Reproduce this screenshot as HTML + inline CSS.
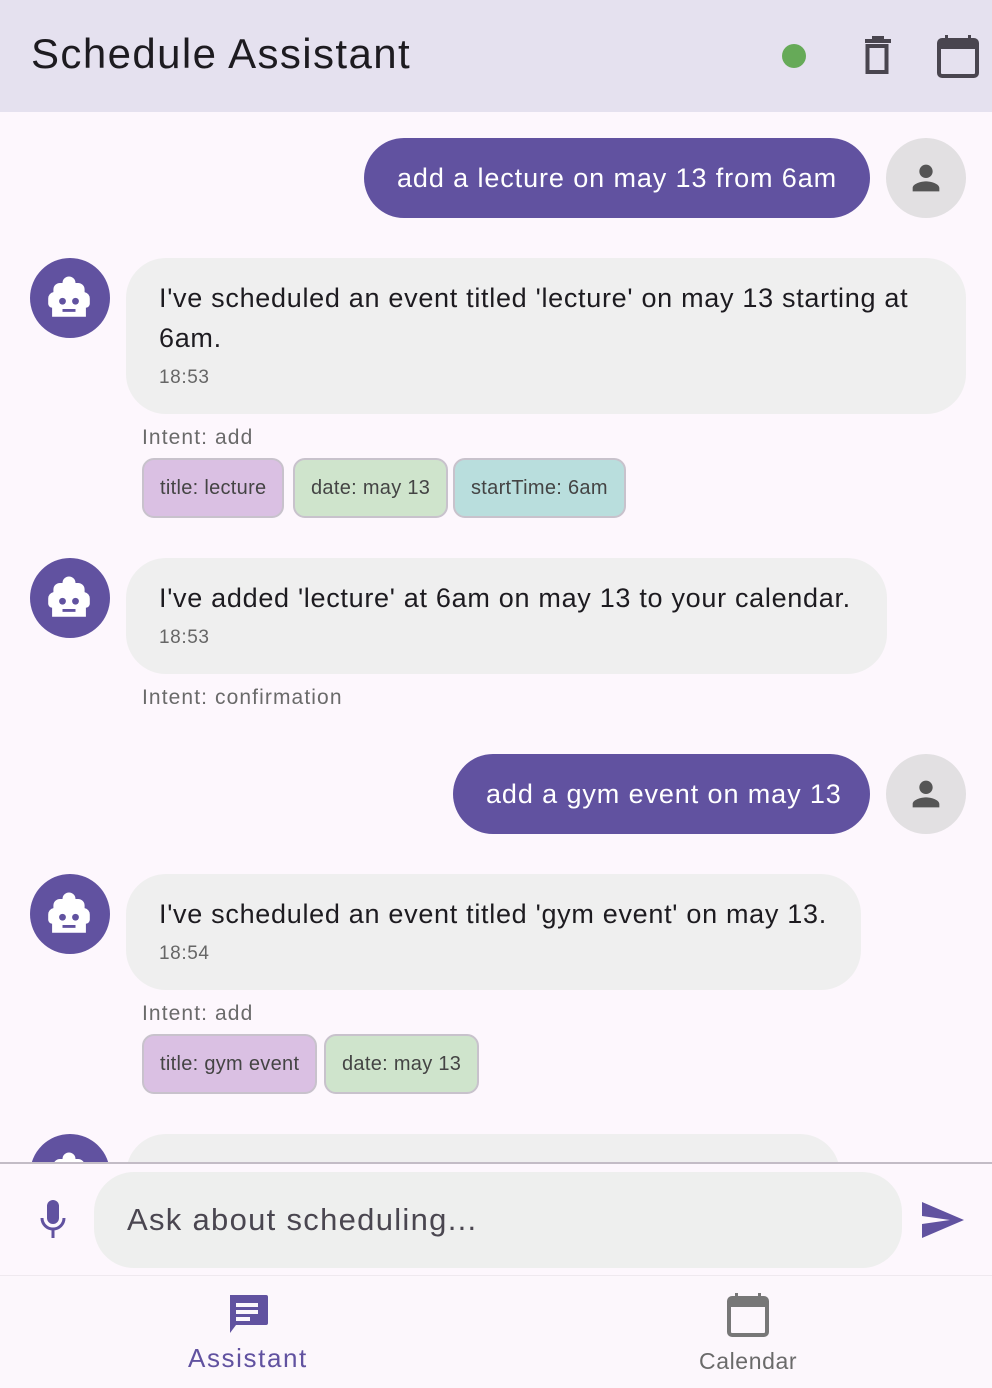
<!DOCTYPE html>
<html><head><meta charset="utf-8"><style>
*{margin:0;padding:0;box-sizing:border-box}
body{width:992px;height:1388px;overflow:hidden;background:#fdf7fd;font-family:"Liberation Sans",sans-serif;position:relative;color:#1d1b20}
.a{position:absolute}
.hdr{left:0;top:0;width:992px;height:112px;background:#e5e1ef}
.title{left:31px;top:30px;font-size:42px;color:#1d1b20;letter-spacing:1.4px}
.ub{background:#6152a0;color:#fff;border-radius:40px;height:80px;font-size:27px;line-height:80px;padding:0 33px;letter-spacing:0.9px;white-space:nowrap}
.uav{width:80px;height:80px;border-radius:50%;background:#e2e0e2}
.bav{width:80px;height:80px;border-radius:50%;background:#6152a0}
.bb{background:#efefef;border-radius:40px;padding:20px 33px 0 33px;font-size:27px;line-height:40px;color:#1d1b20;letter-spacing:0.7px}
.tm{font-size:19px;color:#666;line-height:28px;margin-top:6px;letter-spacing:0.6px}
.in{font-size:21px;color:#6a6a6a;letter-spacing:1.1px}
.chip{height:60px;border-radius:12px;border:2px solid #c8c2cc;font-size:20px;line-height:56px;padding:0 16px;color:#444;letter-spacing:0.3px;white-space:nowrap}
.p{background:#dac0e3}.g{background:#cfe4cc}.t{background:#b9dedd}
</style></head><body>
<div class="a hdr"></div>
<div class="a title">Schedule Assistant</div>
<div class="a" style="left:782px;top:44px;width:24px;height:24px;border-radius:50%;background:#66aa58"></div>
<svg class="a" style="left:862px;top:36px" width="32" height="40" viewBox="0 0 32 40"><rect x="3" y="3" width="26" height="4" fill="#49454f"/><rect x="10" y="0" width="12" height="4" fill="#49454f"/><rect x="5.5" y="10" width="19" height="26" fill="none" stroke="#49454f" stroke-width="4"/></svg>
<svg class="a" style="left:936px;top:34px" width="44" height="44" viewBox="0 0 44 44"><rect x="3" y="6" width="38" height="36" rx="3" fill="none" stroke="#49454f" stroke-width="4"/><rect x="3" y="6" width="38" height="9" fill="#49454f"/><rect x="9" y="1" width="3" height="6" fill="#49454f"/><rect x="32" y="1" width="3" height="6" fill="#49454f"/></svg>

<div class="a ub" style="left:364px;top:138px;width:506px">add a lecture on may 13 from 6am</div>
<div class="a uav" style="left:886px;top:138px"></div>
<svg class="a" style="left:906px;top:158px" width="40" height="40" viewBox="0 0 24 24"><path fill="#555" d="M12 12c2.2 0 4-1.8 4-4s-1.8-4-4-4-4 1.8-4 4 1.8 4 4 4zm0 2c-2.7 0-8 1.3-8 4v2h16v-2c0-2.7-5.3-4-8-4z"/></svg>

<svg width="0" height="0" style="position:absolute"><defs><g id="bot" transform="translate(39 38) scale(1.3) translate(-40 -30)"><path fill="#fff" d="M40 15a5 5 0 0 1 5 5h2a5 5 0 0 1 5 5v2a5 5 0 0 1 4 5v4a3 3 0 0 1-3 3v7H27v-7a3 3 0 0 1-3-3v-4a5 5 0 0 1 4-5v-2a5 5 0 0 1 5-5h2a5 5 0 0 1 5-5z"/><circle cx="35" cy="34" r="2.6" fill="#6152a0"/><circle cx="45" cy="34" r="2.6" fill="#6152a0"/><rect x="35" y="40" width="10" height="2.2" fill="#6152a0"/></g></defs></svg>

<div class="a bav" style="left:30px;top:258px"><svg width="80" height="80"><use href="#bot"/></svg></div>
<div class="a bb" style="left:126px;top:258px;width:840px;height:156px">I've scheduled an event titled 'lecture' on may 13 starting at 6am.<div class="tm">18:53</div></div>
<div class="a in" style="left:142px;top:426px">Intent: add</div>
<div class="a chip p" style="left:142px;top:458px">title: lecture</div>
<div class="a chip g" style="left:293px;top:458px">date: may 13</div>
<div class="a chip t" style="left:453px;top:458px">startTime: 6am</div>

<div class="a bav" style="left:30px;top:558px"><svg width="80" height="80"><use href="#bot"/></svg></div>
<div class="a bb" style="left:126px;top:558px;width:761px;height:116px;white-space:nowrap">I've added 'lecture' at 6am on may 13 to your calendar.<div class="tm">18:53</div></div>
<div class="a in" style="left:142px;top:686px">Intent: confirmation</div>

<div class="a ub" style="left:453px;top:754px;width:417px">add a gym event on may 13</div>
<div class="a uav" style="left:886px;top:754px"></div>
<svg class="a" style="left:906px;top:774px" width="40" height="40" viewBox="0 0 24 24"><path fill="#555" d="M12 12c2.2 0 4-1.8 4-4s-1.8-4-4-4-4 1.8-4 4 1.8 4 4 4zm0 2c-2.7 0-8 1.3-8 4v2h16v-2c0-2.7-5.3-4-8-4z"/></svg>

<div class="a bav" style="left:30px;top:874px"><svg width="80" height="80"><use href="#bot"/></svg></div>
<div class="a bb" style="left:126px;top:874px;width:735px;height:116px;white-space:nowrap">I've scheduled an event titled 'gym event' on may 13.<div class="tm">18:54</div></div>
<div class="a in" style="left:142px;top:1002px">Intent: add</div>
<div class="a chip p" style="left:142px;top:1034px">title: gym event</div>
<div class="a chip g" style="left:324px;top:1034px">date: may 13</div>

<div class="a bav" style="left:30px;top:1134px"><svg width="80" height="80"><use href="#bot"/></svg></div>
<div class="a" style="left:126px;top:1134px;width:714px;height:80px;border-radius:40px;background:#efefef"></div>

<div class="a" style="left:0;top:1162px;width:992px;height:2px;background:#c3bcc6"></div>
<div class="a" style="left:0;top:1164px;width:992px;height:111px;background:#fdf7fd"></div>
<svg class="a" style="left:36px;top:1198px" width="36" height="42" viewBox="0 0 36 42"><rect x="11" y="2" width="12" height="24" rx="6" fill="#6152a0"/><path d="M6 20a11 11 0 0 0 22 0" fill="none" stroke="#6152a0" stroke-width="3"/><rect x="15.5" y="30" width="3" height="10" fill="#6152a0"/></svg>
<div class="a" style="left:94px;top:1172px;width:808px;height:96px;border-radius:40px;background:#eeefee;font-size:31px;line-height:96px;padding-left:33px;color:#4a4650;letter-spacing:1.3px">Ask about scheduling...</div>
<svg class="a" style="left:918px;top:1200px" width="48" height="40" viewBox="0 0 48 40"><path d="M4 2L46 20 4 38V24L32 20 4 16z" fill="#6152a0"/></svg>

<div class="a" style="left:0;top:1275px;width:992px;height:1px;background:#efe9ef"></div>
<div class="a" style="left:0;top:1276px;width:992px;height:112px;background:#fcf7fc"></div>
<svg class="a" style="left:226px;top:1293px" width="44" height="42" viewBox="0 0 44 42"><path d="M4 2h36a2 2 0 0 1 2 2v26a2 2 0 0 1-2 2H10L4 40z" fill="#6152a0"/><rect x="10" y="10" width="22" height="4" fill="#fcf7fc"/><rect x="10" y="17" width="22" height="4" fill="#fcf7fc"/><rect x="10" y="24" width="14" height="4" fill="#fcf7fc"/></svg>
<div class="a" style="left:188px;top:1343px;font-size:26px;color:#6152a0;letter-spacing:1.6px">Assistant</div>
<svg class="a" style="left:726px;top:1292px" width="44" height="46" viewBox="0 0 44 46"><rect x="3" y="6" width="38" height="37" rx="3" fill="none" stroke="#777" stroke-width="4"/><rect x="3" y="6" width="38" height="9" fill="#777"/><rect x="9" y="1" width="3" height="6" fill="#777"/><rect x="32" y="1" width="3" height="6" fill="#777"/></svg>
<div class="a" style="left:699px;top:1348px;font-size:23px;color:#6a6a6a;letter-spacing:0.6px">Calendar</div>
</body></html>
